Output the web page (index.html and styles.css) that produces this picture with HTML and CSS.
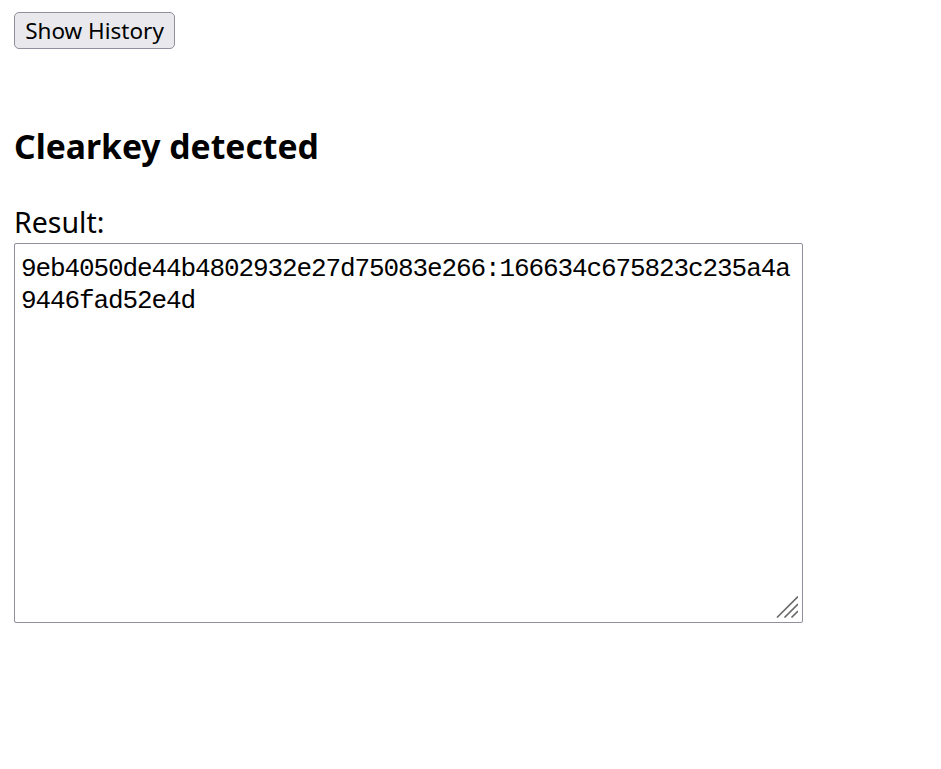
FILE: index.html
```html
<!DOCTYPE html>
<html>
<head>
<meta charset="utf-8">
<link rel="stylesheet" href="styles.css">
</head>
<body>
<button class="history-btn">Show History</button>
<h2 class="title">Clearkey detected</h2>
<div class="result-label">Result:</div>
<div class="result-wrap">
  <textarea class="result-box">9eb4050de44b4802932e27d75083e266:166634c675823c235a4a9446fad52e4d</textarea>
  <svg class="grip" width="22" height="22" viewBox="0 0 22 22" aria-hidden="true">
    <path d="M1 21.5 L22 0.5 M8.5 21.5 L22 8 M15.5 21.5 L22 15" stroke="#6a6a6a" stroke-width="1.6" fill="none"/>
  </svg>
</div>
</body>
</html>
```
FILE: styles.css
```css
html, body {
  margin: 0;
  background: #fff;
}
body {
  padding: 12px 14px;
  font-family: "Noto Sans", "Open Sans", sans-serif;
  color: #000;
}
.history-btn {
  display: block;
  box-sizing: border-box;
  width: 161px;
  height: 37px;
  padding: 0;
  font-family: "Noto Sans", sans-serif;
  font-size: 22.5px;
  color: #000;
  background: #e9e9ed;
  border: 1px solid #8f8f9d;
  border-radius: 5px;
}
.title {
  margin: 74px 0 0;
  font-size: 33.7px;
  font-weight: 700;
  line-height: 46px;
}
.result-label {
  margin-top: 36px;
  font-size: 28.5px;
  line-height: 34px;
}
.result-wrap {
  position: relative;
  width: 789px;
  margin-top: 4px;
}
.result-box {
  display: block;
  box-sizing: border-box;
  width: 789px;
  height: 380px;
  margin: 0;
  padding: 9px 7px 6px 6px;
  font-family: "Liberation Mono", monospace;
  font-size: 26px;
  letter-spacing: -1.1px;
  line-height: 32px;
  color: #000;
  background: #fff;
  border: 1px solid #8f8f9d;
  border-radius: 2px;
  resize: none;
}
.grip {
  position: absolute;
  right: 5px;
  bottom: 5px;
  pointer-events: none;
}
```
